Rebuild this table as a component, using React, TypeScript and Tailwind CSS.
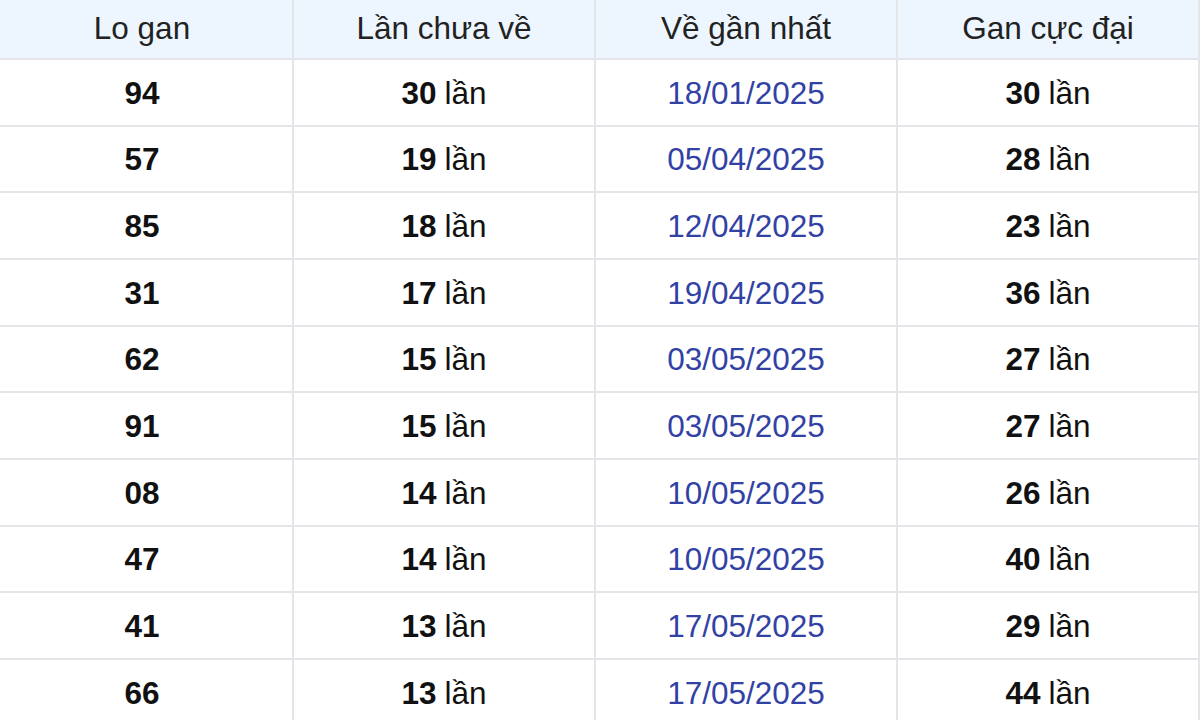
import React from 'react';

interface GanRow {
  so: string;
  chuaVe: number;
  ganNhat: string;
  cucDai: number;
}

const rows: GanRow[] = [
  { so: '94', chuaVe: 30, ganNhat: '18/01/2025', cucDai: 30 },
  { so: '57', chuaVe: 19, ganNhat: '05/04/2025', cucDai: 28 },
  { so: '85', chuaVe: 18, ganNhat: '12/04/2025', cucDai: 23 },
  { so: '31', chuaVe: 17, ganNhat: '19/04/2025', cucDai: 36 },
  { so: '62', chuaVe: 15, ganNhat: '03/05/2025', cucDai: 27 },
  { so: '91', chuaVe: 15, ganNhat: '03/05/2025', cucDai: 27 },
  { so: '08', chuaVe: 14, ganNhat: '10/05/2025', cucDai: 26 },
  { so: '47', chuaVe: 14, ganNhat: '10/05/2025', cucDai: 40 },
  { so: '41', chuaVe: 13, ganNhat: '17/05/2025', cucDai: 29 },
  { so: '66', chuaVe: 13, ganNhat: '17/05/2025', cucDai: 44 },
];

const headers = ['Lo gan', 'Lần chưa về', 'Về gần nhất', 'Gan cực đại'];

const cell = 'flex items-center justify-center border-r-2 border-[#e3e5e8]';

const App: React.FC = () => {
  return (
    <div className="w-[1200px] h-[720px] overflow-hidden bg-white font-['Liberation_Sans',Arial,sans-serif] text-[31.5px]">
      <div className="ml-[-8px] w-[1208px]">
        {/* tiêu đề */}
        <div className="grid grid-cols-4 h-[60px] bg-[#edf6fe] border-b-2 border-[#e3e5e8] text-[#222]">
          {headers.map((h) => (
            <div key={h} className={cell}>
              {h}
            </div>
          ))}
        </div>

        {rows.map((r, i) => (
          <div key={i} className="grid grid-cols-4 h-[66.67px] border-b-2 border-[#e3e5e8] text-[#111]">
            <div className={`${cell} font-bold pt-[2px]`}>{r.so}</div>
            <div className={`${cell} pt-[2px]`}>
              <span className="font-bold">{r.chuaVe}</span>
              <span className="ml-[8px]">lần</span>
            </div>
            <div className={`${cell} pt-[2px] text-[#3242a4]`}>{r.ganNhat}</div>
            <div className={`${cell} pt-[2px]`}>
              <span className="font-bold">{r.cucDai}</span>
              <span className="ml-[8px]">lần</span>
            </div>
          </div>
        ))}
      </div>
    </div>
  );
};

export default App;
